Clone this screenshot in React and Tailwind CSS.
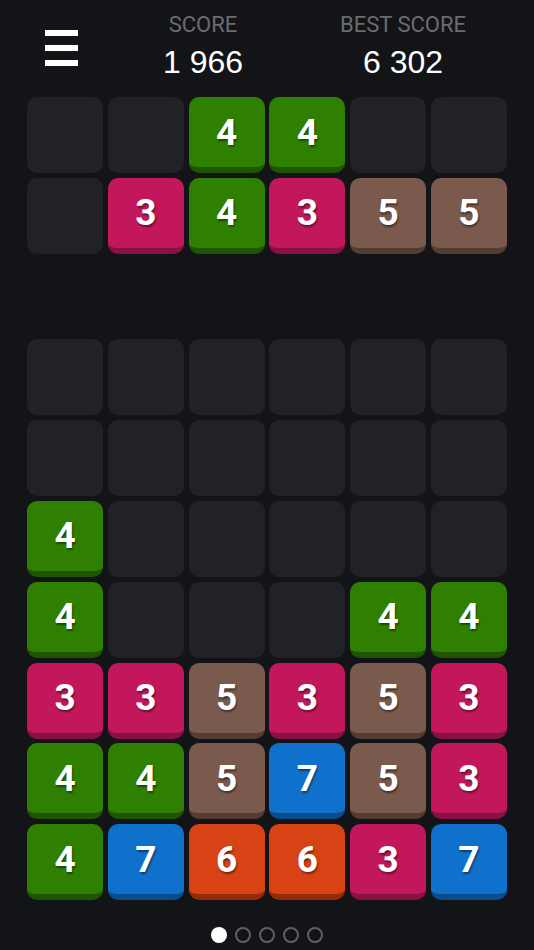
const COLORS = {
  3: "bg-[#c2185b] border-[#8a1043]",
  4: "bg-[#2f8000] border-[#1f5500]",
  5: "bg-[#7a5a4d] border-[#533c34]",
  6: "bg-[#d84315] border-[#952b0b]",
  7: "bg-[#1071cc] border-[#0b4d8c]",
};

const board = [
  [0, 0, 4, 4, 0, 0],
  [0, 3, 4, 3, 5, 5],
  null,
  [0, 0, 0, 0, 0, 0],
  [0, 0, 0, 0, 0, 0],
  [4, 0, 0, 0, 0, 0],
  [4, 0, 0, 0, 4, 4],
  [3, 3, 5, 3, 5, 3],
  [4, 4, 5, 7, 5, 3],
  [4, 7, 6, 6, 3, 7],
];

const Cell = ({ v }) => {
  if (!v) return <div className="h-[76px] rounded-[10px] bg-[#212226]" />;
  return (
    <div
      className={`h-[76px] rounded-[10px] border-b-[6px] flex items-center justify-center text-white font-bold text-[37px] leading-none [text-shadow:1px_2px_2px_rgba(0,0,0,0.45)] ${COLORS[v]}`}
      style={{ fontFamily: "Roboto, sans-serif" }}
    >
      {v}
    </div>
  );
};

export default function App() {
  return (
    <div
      className="w-[534px] h-[950px] bg-[#131417] overflow-hidden"
      style={{ fontFamily: '"Liberation Sans", Arial, sans-serif' }}
    >
      {/* header */}
      <div className="flex h-[97px]">
        <div className="w-[124px] pl-[45px] pt-[30px]">
          <div className="w-[33px] flex flex-col gap-[9px]">
            <div className="h-[6px] bg-white" />
            <div className="h-[6px] bg-white" />
            <div className="h-[6px] bg-white" />
          </div>
        </div>
        <div className="w-[158px] flex flex-col items-center pt-[14px]">
          <div className="text-[22px] leading-none text-[#6b6c70] font-['Roboto',sans-serif]">SCORE</div>
          <div className="text-[32px] leading-none text-white mt-[10px]">1 966</div>
        </div>
        <div className="w-[242px] flex flex-col items-center pt-[14px]">
          <div className="text-[22px] leading-none text-[#6b6c70] font-['Roboto',sans-serif]">BEST SCORE</div>
          <div className="text-[32px] leading-none text-white mt-[10px]">6 302</div>
        </div>
      </div>

      {/* board */}
      <div className="ml-[27px] w-[480px] flex flex-col gap-[4.8px]">
        {board.map((row, i) =>
          row ? (
            <div key={i} className="grid grid-cols-6 gap-[4.8px]">
              {row.map((v, j) => (
                <Cell key={j} v={v} />
              ))}
            </div>
          ) : (
            <div key={i} className="h-[76px]" />
          )
        )}
      </div>

      {/* pager */}
      <div className="flex justify-center gap-[8px] mt-[27px]">
        <div className="w-[16px] h-[16px] rounded-full bg-white" />
        {[1, 2, 3, 4].map((k) => (
          <div key={k} className="w-[16px] h-[16px] rounded-full border-2 border-[#5f6064]" />
        ))}
      </div>
    </div>
  );
}
